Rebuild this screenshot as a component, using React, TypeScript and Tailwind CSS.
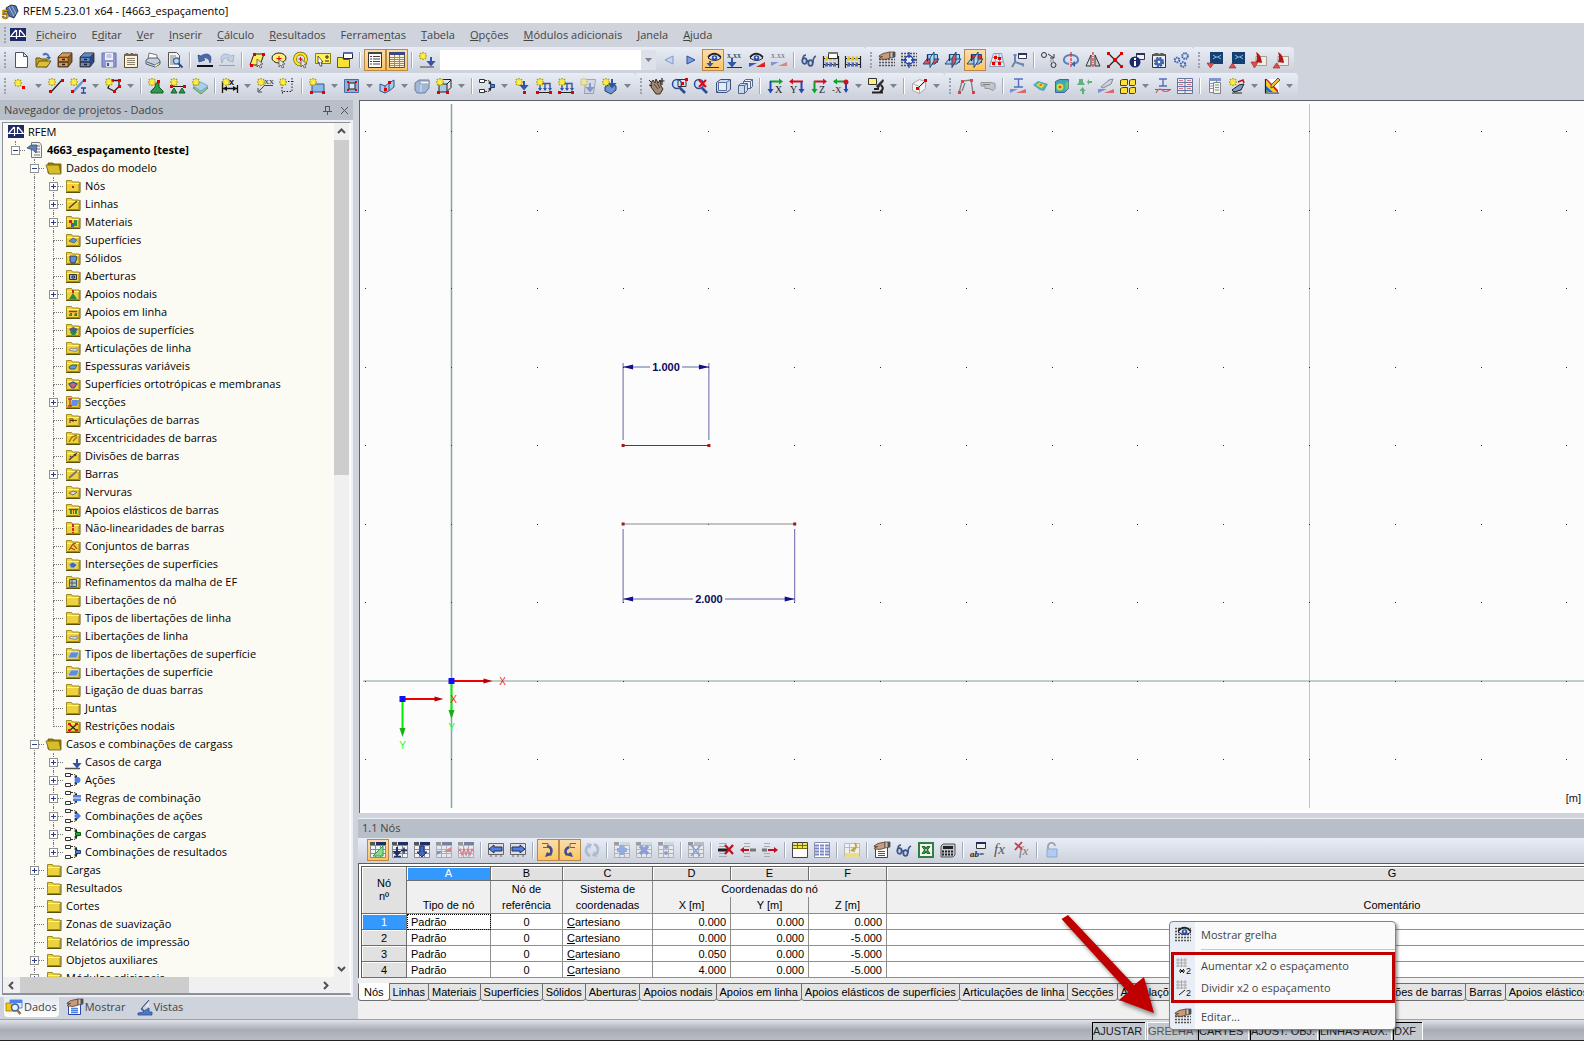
import { Fragment, type ReactNode } from "react";
import clsx from "clsx";

/* ---------- small shapes shared by the icons ---------- */

const Star = ({ x = 0, y = 0 }: { x?: number; y?: number }) => (
  <g transform={`translate(${x} ${y})`}>
    <path d="M4 0v8M0 4h8M1 1l6 6M7 1L1 7" stroke="#b5a300" strokeWidth="1.6" />
    <path d="M4 1v6M1 4h6M2 2l4 4M6 2L2 6" stroke="#fff04a" strokeWidth="1.2" />
  </g>
);

const Dot = ({ x, y, c = "#e00000" }: { x: number; y: number; c?: string }) => (
  <rect x={x} y={y} width="3" height="3" fill={c} />
);

const Down = ({ x, y, c = "#3454a8" }: { x: number; y: number; c?: string }) => (
  <path d={`M${x} ${y}v5M${x - 2.5} ${y + 5}h5l-2.500 3z`} stroke={c} strokeWidth="2" fill={c} />
);

const GridDots = ({ from = 1 }: { from?: number }) => (
  <path
    d={[1.5, 4.5, 7.5, 10.5, 13.5].filter((y) => y >= from).map((y) => `M0 ${y}h16`).join("")}
    stroke="#555"
    strokeDasharray="2 1"
    strokeWidth="1.4"
  />
);

const Hand = () => (
  <>
    <path d="M0 4l4-2.500 7-1.500v6l-3 1-3 .5-2-.5-2 .5-.5-1.500 3-1.500-3 .5z" fill="#c99b78" stroke="#4d3a30" strokeWidth=".8" />
    <path d="M11 0h5v5l-5 1z" fill="#d8c0a8" stroke="#4a4f58" strokeWidth=".8" />
    <path d="M13.500 0H16v5l-2.500.5z" fill="#4a4f58" />
  </>
);

const Eye = ({ x = 0, y = 0 }: { x?: number; y?: number }) => (
  <g transform={`translate(${x} ${y})`}>
    <path d="M0 5q6-8 13 0q-6 5-13 0z" fill="#dfe7f5" stroke="#222" />
    <path d="M0 4q6-7 13 0" stroke="#222" strokeWidth="1.5" />
    <circle cx="6.5" cy="5" r="2.8" fill="#2a4fb0" />
    <circle cx="6.5" cy="4.5" r="1" fill="#fff" />
  </g>
);

const Frame = ({ c = "#1d2f63" }: { c?: string }) => (
  <>
    <path d="M.5 3.5h15v12H.5zM.5 7.5h15M.5 11.5h15M5.5 3.5v12M10.5 3.5v12" fill="#f3f3f3" stroke="#8a8a8a" />
    <path d="M0 0h5v3H0z" fill="#555" />
    <path d="M6 0h10v3H6z" fill={c} />
  </>
);

const Planes = ({ hot }: { hot: "xy" | "xz" | "yz" }) => (
  <>
    <path d="M4.500 2.500h10v8h-10z" fill={hot === "yz" ? "#f02818" : "#a4d4f4"} stroke="#1a4a80" />
    <path d="M0 12l4-5h12l-4 5z" fill={hot === "xy" ? "#f04038" : "#a4d4f4"} fillOpacity=".85" stroke="#1a4a80" />
    <path d="M7 6l4-6v9l-4 6.500z" fill={hot === "xz" ? "#f04038" : "#bfe2fa"} fillOpacity=".85" stroke="#1a4a80" />
    <path d="M4.500 2.500V9" stroke="#12306a" strokeWidth="1.400" />
  </>
);

const Flow = ({ children }: { children?: ReactNode }) => (
  <>
    <path d="M.5 1.5h5v3h-5zM.5 11.5h5v3h-5z" fill="#fff" stroke="#333" />
    <path d="M6 2.500h3q3 1 3 4M6 13.500h3q3-1 3-4" stroke="#333" strokeDasharray="2 1" />
    <path d="M12 7V3L9 5zM12 9v4l-3-2z" fill="#222" />
    {children}
  </>
);

const Axis = ({ t, flip }: { t: string; flip?: boolean }) => {
  const across = t === "X" ? "#10a030" : "#d01020";
  const down = t === "Z" ? "#10a030" : "#2848b0";
  return (
    <>
      <path d={flip ? "M2 3.500h12" : "M3 3.500h10"} stroke={across} strokeWidth="2" />
      <path d={flip ? "M4 .5v6L0 3.500z" : "M12 .5v6l4-3z"} fill={across} />
      <path d={flip ? "M12.500 3v9" : "M3.500 3v9"} stroke={down} strokeWidth="2" />
      <path d={flip ? "M9.500 11h6l-3 4.500z" : "M.5 11h6l-3 4.500z"} fill={down} />
      <text x={flip ? 1 : 8} y="15" fontSize="10" fontFamily="Liberation Serif" fill="#222">
        {t}
      </text>
    </>
  );
};

const Abacus = () => (
  <>
    <path d="M.5 4v12M15.500 4v12M0 6.500h16M0 12.500h16" stroke="#222" strokeWidth="1.200" />
    <path d="M2 6.500h12" stroke="#e8c400" strokeWidth="4" strokeDasharray="3 1" />
    <path d="M2 12.500h12" stroke="#4464c8" strokeWidth="4" strokeDasharray="3 1" />
    <path d="M2 5.500h12M2 11.500h12" stroke="#fff" strokeOpacity=".6" strokeDasharray="1 3" />
  </>
);

const Drawer = ({ a, b }: { a: string; b: string }) => (
  <>
    <path d="M5 1h10v9l-4 5H1V5z" fill={a} stroke="#3a2a18" strokeWidth=".8" />
    <path d="M1 5l4-4h10l-4 4z" fill={b} stroke="#3a2a18" strokeWidth=".5" />
    <path d="M1.500 5.500h9.500v4H1.500zM1.500 10.500h9.500v4H1.500z" fill={b} stroke="#3a2a18" strokeWidth=".6" />
    <path d="M5 7.500h3M5 12.500h3" stroke="#222" strokeWidth="1.300" />
  </>
);

const Lens = ({ children }: { children?: ReactNode }) => (
  <>
    <circle cx="6" cy="6" r="4.500" fill="#cfe2fa" stroke="#2b4a94" strokeWidth="1.500" />
    <path d="M9 10l5 5" stroke="#2b4a94" strokeWidth="2.600" />
    {children}
  </>
);

const Monitor = ({ up }: { up?: boolean }) => (
  <>
    <path d="M3 0h13v12H3z" fill="#15406f" />
    <path d="M6 3l3 2-3 2M14 3l-3 2 3 2M9 5h2" stroke="#7fc4f0" />
    <path d={up ? "M0 16h7l-3.500-5z" : "M0 11h7l-3.500 5z"} fill="#e84a4a" stroke="#a02020" strokeWidth=".6" />
  </>
);

const Pdf = ({ up }: { up?: boolean }) => (
  <>
    <path d="M5 4.500h10.500v9H5z" fill="#f0ece8" stroke="#a89a90" />
    <path d="M5 0q5 2 6 11l-6-1q2-4 0-10z" fill="#b01818" />
    <path d={up ? "M0 16h7l-3.500-5z" : "M0 10h7l-3.500 6z"} fill="#e84a4a" stroke="#a02020" strokeWidth=".6" />
  </>
);

const Loads = () => (
  <>
    <path d="M3 5.500h6v6M9 5.500h5v6M4 6v6" stroke="#3454a8" strokeWidth="1.400" />
    <path d="M2 10h4l-2 3zM7 10h4l-2 3zM12 10h4l-2 3z" fill="#3454a8" />
    <path d="M1 14.500h14" stroke="#222" />
    <Dot x={0} y={13} />
    <Dot x={13} y={13} />
    <Star />
  </>
);

const Arrow = () => (
  <path d="M8 7l6 5-2.500.3 1.300 3-1.600.7-1.400-3L8 15z" fill="#e4e4e4" stroke="#555" strokeWidth=".8" />
);

const icons: Record<string, ReactNode> = {
  doc: <path d="M2.500.5h8l4 4v11h-12zM10.500.5v4h4" fill="#fff" stroke="#4c5566" />,
  open: (
    <>
      <path d="M1 14V6h4l1 1h6v8z" fill="#c9a227" stroke="#6d5510" />
      <path d="M4 9h12l-4 6H1z" fill="#d9bf3a" stroke="#6d5510" />
      <path d="M8 3q4-3 6 2" stroke="#4a76b5" strokeWidth="2" />
      <path d="M11 5h5l-2 3z" fill="#3566b5" />
    </>
  ),
  drawer: <Drawer a="#8c5b28" b="#d99a4e" />,
  drawerBlue: <Drawer a="#274a8c" b="#5b8bd6" />,
  save: (
    <>
      <path d="M1 1h14v14H1z" fill="#8f96d4" stroke="#6a70b0" />
      <path d="M4 1h8v7H4z" fill="#eef0fa" />
      <path d="M5 10h7v5H5z" fill="#dfe2ea" />
      <path d="M5.500 3h5M5.500 5h5" stroke="#9a9fc0" />
      <path d="M6 11h2v3H6z" fill="#4f5590" />
    </>
  ),
  notes: (
    <>
      <path d="M1.500 2.500h13v13h-13z" fill="#fbf3d8" stroke="#5b4a3a" />
      <path d="M1 4l2-3h2l1 2 2-2h2l1 2 2-2 2 3z" fill="#7a6654" />
      <path d="M4 6.500h8M4 8.500h8M4 10.500h8M4 12.500h8" stroke="#8b8070" />
    </>
  ),
  print: (
    <>
      <path d="M4 1l8 2v5H3z" fill="#fff" stroke="#777" />
      <path d="M1 8l3-2h9l2 3v3l-5 3-9-3z" fill="#c9cedd" stroke="#555f78" />
      <path d="M2 10l8 3 5-3" stroke="#555f78" />
      <path d="M10 13l4-2v1l-4 3z" fill="#f4f48a" />
    </>
  ),
  preview: (
    <>
      <path d="M1.500.5h8l3 3v12h-11z" fill="#f4f4f4" stroke="#555" />
      <path d="M3 4h6M3 6h4M3 8h3M3 10h3M3 12h5" stroke="#888" />
      <circle cx="9.500" cy="9" r="3" fill="#bcd8f5" stroke="#456a9c" strokeWidth="1.300" />
      <path d="M11.500 11.500l4 4" stroke="#2b4a84" strokeWidth="2" />
    </>
  ),
  undo: (
    <>
      <path d="M1 3l1 7 6-2-2-2q6-1 7 5q3-8-3-9-4 0-6 2z" fill="#4868b0" stroke="#1f3470" strokeWidth=".6" />
      <path d="M0 14h16" stroke="#111" strokeWidth="2" />
    </>
  ),
  redo: (
    <>
      <path d="M15 3l-1 7-6-2 2-2q-6-1-7 5q-3-8 3-9 4 0 6 2z" fill="#c4d0e4" stroke="#8e9cb8" strokeWidth=".6" />
      <path d="M0 13.500h16" stroke="#9aa0ac" />
    </>
  ),
  selPoly: (
    <>
      <path d="M5 2h10l-4 11H1z" fill="#ffef5a" stroke="#222" />
      <Dot x={4} y={1} />
      <Dot x={13} y={1} />
      <Dot x={1} y={12} />
      <Arrow />
    </>
  ),
  selEllipse: (
    <>
      <ellipse cx="8" cy="6" rx="7" ry="5" fill="#fff27a" stroke="#222" />
      <path d="M8 4v5M5.500 6.500h5" stroke="#e00000" />
      <Arrow />
    </>
  ),
  selRing: (
    <>
      <circle cx="7.500" cy="7" r="5.500" stroke="#6b5d00" strokeWidth="3.500" />
      <circle cx="7.500" cy="7" r="5.500" stroke="#ffe520" strokeWidth="2.200" />
      <path d="M7.500 5v4M5.500 7h4" stroke="#e00000" />
      <Arrow />
    </>
  ),
  selSquare: (
    <>
      <path d="M.5 1.500h15v10H.5z" fill="#ffef5a" stroke="#8b7d00" />
      <path d="M10 5h4M12 3v4M10 9h4" stroke="#222" />
      <path d="M3 4l5 6-2 0 1 4-2 0-1-4-1 1z" fill="#fff" stroke="#222" strokeWidth=".7" />
    </>
  ),
  selWin: (
    <>
      <path d="M.5 5.500h5l1 2h6v8H.5z" fill="#f7e23a" stroke="#6b5d00" />
      <path d="M6.500.5h9v6h-9z" fill="#fff" stroke="#223" />
      <path d="M6 0h10v2H6z" fill="#5b6aa0" />
    </>
  ),
  nav: (
    <>
      <path d="M1.500.5h13v15h-13z" fill="#fff" stroke="#333" />
      <path d="M1 0h14v2H1z" fill="#444" />
      <path d="M3 4.500h2M6 4.500h7M3 7h2M6 7h7M3 9.500h2M6 9.500h7M3 12h2M6 12h7" stroke="#444" />
    </>
  ),
  table: (
    <>
      <path d="M.5.5h15v15H.5z" fill="#fdf1d8" stroke="#555" />
      <path d="M0 0h16v3H0z" fill="#3a4a80" />
      <path d="M1 5.500h14M1 7.500h14M1 9.500h14M1 11.500h14M1 13.500h14M5.500 3v12M10.500 3v12" stroke="#a08a60" />
    </>
  ),
  loadNew: (
    <>
      <Star />
      <Down x={12} y={5} />
      <path d="M1 15h14" stroke="#444" />
    </>
  ),
  prev: <path d="M12 4v8L4 8z" fill="#c9d6ee" stroke="#7d98cc" />,
  next: <path d="M4 4v8l8-4z" fill="#7d9fe0" stroke="#2b4a94" />,
  loadEye: (
    <>
      <path d="M5 9v3" stroke="#3454a8" strokeWidth="2" />
      <path d="M1.500 11h7L5 15z" fill="#3454a8" />
      <Eye x={3} y={1} />
      <path d="M0 15.500h14" stroke="#333" />
    </>
  ),
  loadX: (
    <>
      <text x="0" y="6" fontSize="8" fontFamily="Liberation Serif" fill="#111">x.xx</text>
      <Down x={5} y={6} />
      <path d="M0 15.500h15" stroke="#333" />
    </>
  ),
  eyeRes: (
    <>
      <path d="M0 11h8l-8 4z" fill="#3454c8" />
      <path d="M7 15h9v-5z" fill="#e02020" />
      <Eye x={1} y={1} />
    </>
  ),
  resX: (
    <g opacity=".7">
      <text x="0" y="6" fontSize="8" fontFamily="Liberation Serif" fill="#333">x.xx</text>
      <path d="M0 10h8l-8 4z" fill="#5f78c8" />
      <path d="M7 14h9v-4z" fill="#e06060" />
    </g>
  ),
  glasses: (
    <>
      <ellipse cx="3.500" cy="9" rx="2.200" ry="2.800" stroke="#3c5688" strokeWidth="1.800" fill="#c9d6ea" />
      <ellipse cx="9.500" cy="11" rx="2.200" ry="2.800" stroke="#3c5688" strokeWidth="1.800" fill="#c9d6ea" />
      <path d="M5 8.500l3 1M2 7q0-4 3-4M12 11q0-6 3-7" stroke="#3c5688" strokeWidth="1.600" />
    </>
  ),
  abacusWin: (
    <>
      <Abacus />
      <path d="M5.500.5h9v6h-9z" fill="#fff" stroke="#333" />
      <path d="M5 0h10v2H5z" fill="#777" />
    </>
  ),
  abacus: <Abacus />,
  gridHand: (
    <>
      <GridDots from={7} />
      <Hand />
    </>
  ),
  gridSnap: (
    <>
      <GridDots />
      <circle cx="8" cy="8" r="4" fill="#e6ecfa" stroke="#1d3fb0" strokeWidth="1.400" />
      <path d="M8 0v6M8 10v6M0 8h6M10 8h6" stroke="#1d3fb0" strokeWidth="1.300" />
    </>
  ),
  planeXY: <Planes hot="xy" />,
  planeXZ: <Planes hot="xz" />,
  planeYZ: <Planes hot="yz" />,
  planeGrid: (
    <>
      <path d="M4.500 1.500h8l3 13H.5zM7 2L5.500 14M10 2l1 12M3.500 5.500h10M2 10h12" stroke="#8a9cb8" fill="#e4ecf6" />
      <Dot x={5} y={4} />
      <Dot x={9} y={5} />
      <Dot x={9} y={10} />
      <Dot x={3} y={10} />
    </>
  ),
  axes: (
    <>
      <path d="M4 2v8l9 3M4 10l-3 5" stroke="#6a86ac" strokeWidth="2" />
      <path d="M2 3h4M12 11v4" stroke="#6a86ac" />
      <path d="M7.500 1.500h8v5h-8z" fill="#fff" stroke="#335" />
      <path d="M7 1h9v2H7z" fill="#335" />
    </>
  ),
  copyNodes: (
    <>
      <circle cx="3" cy="3" r="2.500" stroke="#333" />
      <circle cx="12.500" cy="13" r="2.500" stroke="#333" />
      <circle cx="11" cy="9" r="1.500" stroke="#999" />
      <path d="M7 2l6 4M13 2v4H9" stroke="#333" />
    </>
  ),
  rotate: (
    <>
      <path d="M6 12q-6-1-5-5t7-4 7 4-5 5" stroke="#5a82c0" strokeWidth="2" />
      <path d="M12 9v6l-4-3z" fill="#3566b5" />
      <path d="M8 0v16" stroke="#e00000" strokeDasharray="3 1 1 1" />
    </>
  ),
  mirror: (
    <>
      <path d="M6 3v11H1z" stroke="#333" />
      <path d="M10 3v11h5z" fill="#ccc" stroke="#333" />
      <path d="M8 0v16" stroke="#e00000" strokeDasharray="3 1 1 1" />
    </>
  ),
  connect: (
    <>
      <path d="M2 2l12 12M14 2L2 14" stroke="#222" strokeWidth="1.300" />
      <Dot x={0} y={0} />
      <Dot x={13} y={0} />
      <Dot x={0} y={13} />
      <Dot x={13} y={13} />
      <path d="M6 6h4v4H6z" fill="#e00000" />
    </>
  ),
  info: (
    <>
      <path d="M7.500 1.500h8v6h-8z" fill="#eef" stroke="#335" />
      <path d="M7 1h9v2H7z" fill="#335" />
      <circle cx="6" cy="10" r="5.500" fill="#1c2a6c" />
      <path d="M6 9v5M6 6v2" stroke="#fff" strokeWidth="2" />
    </>
  ),
  config: (
    <>
      <path d="M1.500 2.500h13v13h-13z" fill="#e8eefa" stroke="#333" />
      <path d="M1 4l3-3h3l1 1 2-1h2l3 3z" fill="#6a5a4a" />
      <circle cx="8" cy="10" r="4" stroke="#2b4a94" strokeWidth="2" strokeDasharray="2 1.140" />
      <circle cx="8" cy="10" r="2.500" stroke="#4468b0" strokeWidth="2.500" fill="#fff" />
    </>
  ),
  gears: (
    <g stroke="#3f60a8" fill="#dfe8f8">
      <circle cx="4" cy="8" r="2.300" strokeWidth="2" strokeDasharray="1.500 .7" />
      <circle cx="12" cy="4" r="2.800" strokeWidth="2" strokeDasharray="1.500 .7" />
      <circle cx="10" cy="12.500" r="2.300" strokeWidth="2" strokeDasharray="1.500 .7" />
    </g>
  ),
  screenDown: <Monitor />,
  screenUp: <Monitor up />,
  pdfDown: <Pdf />,
  pdfUp: <Pdf up />,
  node: (
    <>
      <Star x={1} y={1} />
      <Dot x={9} y={8} />
    </>
  ),
  line: (
    <>
      <path d="M3 14L14 2" stroke="#222" strokeWidth="1.300" />
      <Dot x={1} y={12} />
      <Dot x={13} y={1} />
      <Star />
    </>
  ),
  member: (
    <>
      <path d="M3 14L14 2" stroke="#6f94cc" strokeWidth="2.400" />
      <Dot x={1} y={12} />
      <Dot x={13} y={1} />
      <Star />
      <path d="M11 10h5M13.500 10v5M11 15h5" stroke="#2848b0" strokeWidth="1.300" />
    </>
  ),
  poly: (
    <>
      <path d="M6 2.500h8v6l-5 5M5 4l-2 6 6 3" stroke="#222" strokeWidth="1.300" />
      <Dot x={6} y={1} />
      <Dot x={13} y={1} />
      <Dot x={13} y={7} />
      <Dot x={8} y={12} />
      <Star />
    </>
  ),
  support: (
    <>
      <path d="M8 5h3v4l4 4v2H3v-2l4-4z" fill="#2f9a4f" stroke="#145a2a" />
      <Dot x={9} y={2} />
      <Star />
    </>
  ),
  lineSupport: (
    <>
      <path d="M2 8.500h12" stroke="#222" />
      <path d="M4 10l3 5H1zM12 10l3 5H9z" fill="#2f9a4f" stroke="#145a2a" />
      <Dot x={0} y={7} />
      <Dot x={13} y={7} />
      <Star />
    </>
  ),
  surfSupport: (
    <>
      <path d="M1 10l8-4 7 4-7 6z" fill="#8cc08c" stroke="#5a9a6a" />
      <path d="M1 8l8-4 7 4-7 5z" fill="#a8d0ec" stroke="#7fa8c8" />
      <Star />
    </>
  ),
  dim: (
    <>
      <path d="M.5 3v12M15.500 7v8M1 10.500h14" stroke="#111" strokeWidth="1.300" />
      <path d="M1 10.500l4-2.500v5zM15 10.500l-4-2.500v5z" fill="#111" />
      <Star />
      <text x="7" y="7" fontSize="9" fontWeight="bold" fontFamily="Liberation Sans" fill="#111">x</text>
    </>
  ),
  dimText: (
    <>
      <path d="M8 7.500h8M8 7L2 13M1 10v4h4" stroke="#444" />
      <Star />
      <text x="7" y="6" fontSize="7" fontFamily="Liberation Serif" fill="#111">XX</text>
    </>
  ),
  guides: (
    <>
      <path d="M3 3.500h10v10H3z" stroke="#222" strokeDasharray="1.500 1.500" />
      <path d="M13 3.500h3M3.500 14v2M13 0v3" stroke="#222" strokeDasharray="1.500 1.500" />
      <Star />
    </>
  ),
  surface: (
    <>
      <path d="M3 6h12v8H3z" fill="#8fb8e6" stroke="#2f5590" />
      <Dot x={1} y={13} />
      <Dot x={13} y={13} />
      <Star />
    </>
  ),
  opening: (
    <>
      <path d="M.5 1.500h14v13H.5z" fill="#8fb0dc" stroke="#4a6ca0" />
      <path d="M5 5h6v6H5z" fill="#dbe7f8" stroke="#222" />
      <path d="M3 3h2v2H3zM11 3h2v2h-2zM3 11h2v2H3zM11 11h2v2h-2z" fill="#e00000" />
    </>
  ),
  shell: (
    <>
      <path d="M1 6l5 2 4-3 5-3v7l-5 4-4 2-5-2zM6 8v7M10 5v8" fill="#a8c8ec" stroke="#2f5590" />
      <Dot x={5} y={10} />
      <Dot x={9} y={3} />
    </>
  ),
  box: (
    <>
      <path d="M1 5l4-3h10v8l-4 5H3l-2-3z" fill="#9fb8d8" stroke="#6a7f9c" />
      <path d="M7 6h8M7 5v9" stroke="#dde6f2" />
      <path d="M6 3h9v3H6z" fill="#f3f5fa" stroke="#8a94a8" />
    </>
  ),
  boxNodes: (
    <>
      <path d="M3 6h8v8H3z" fill="#a8c8ec" stroke="#222" />
      <path d="M7 1.500h8v8l-4 4M11 6l4-4" stroke="#222" />
      <Dot x={1} y={13} />
      <Dot x={10} y={13} />
      <Star />
    </>
  ),
  combine: (
    <Flow>
      <path d="M11.500 6.500h4v3h-4z" fill="#4f80d8" stroke="#1f3f80" />
    </Flow>
  ),
  loadNode: (
    <>
      <Star x={1} />
      <Down x={10} y={3} />
      <Dot x={9} y={13} />
    </>
  ),
  loadLine: <Loads />,
  loadGray: (
    <g opacity=".5">
      <path d="M5.500 1.500h10l-2 14h-9z" fill="#c9d4e8" stroke="#667" />
      <Down x={10} y={5} />
      <Star />
    </g>
  ),
  loadBox: (
    <>
      <path d="M3 9l5-3 6 2v4l-5 4-6-3z" fill="#6f94cc" stroke="#1f3f80" />
      <Down x={10} y={1} />
      <Star />
    </>
  ),
  pan: (
    <>
      <path d="M2 5l2-3 2 3 1-4 2 4 2-3 1 6 2 3-3 5H7L2 9z" fill="#a08a74" stroke="#3d2d20" />
      <path d="M5 6l4 5M8 5l3 5" stroke="#3d2d20" strokeWidth=".8" />
      <path d="M13 0v7M10.500 3h5" stroke="#222" strokeWidth="1.200" />
      <path d="M0 2l3 3M0 7l3 1" stroke="#222" />
    </>
  ),
  zoomWin: (
    <Lens>
      <path d="M7 1.500h8v7H7z" stroke="#333" />
      <Dot x={14} y={0} />
      <Dot x={10} y={4} />
    </Lens>
  ),
  zoomX: (
    <Lens>
      <path d="M6 2l7 7M13 2L6 9" stroke="#d01020" strokeWidth="2.200" />
    </Lens>
  ),
  cube: (
    <>
      <path d="M1.500 4.500l4-3h10v10l-4 3h-10z" fill="#c9d9ef" stroke="#3a4f80" />
      <path d="M3.500 4.500h8v8h-8zM11.500 4.500l4-3M1.500 14.500l2-2" stroke="#5a6f9c" fill="#e4ecf8" />
    </>
  ),
  cubes: (
    <>
      <path d="M6.500 3.500l2-2h7v7l-2 2h-7zM6.500 3.500h7v7M13.500 3.500l2-2" fill="#e8eef8" stroke="#55688f" />
      <path d="M1.500 7.500l2-2h7v7l-3 3h-6zM1.500 7.500h6v8M7.500 7.500l3-2" fill="#c9d9ef" stroke="#55688f" />
    </>
  ),
  viewX: <Axis t="X" />,
  viewY: <Axis t="Y" flip />,
  viewZ: <Axis t="Z" />,
  viewNX: (
    <>
      <path d="M1 3.500h10" stroke="#10a030" strokeWidth="2" />
      <path d="M4 .5v6L0 3.500z" fill="#10a030" />
      <path d="M13 6v6" stroke="#2848b0" strokeWidth="2" />
      <circle cx="13" cy="4" r="2.500" fill="#d01020" />
      <path d="M10.500 11h5L13 15z" fill="#2848b0" />
      <text x="-1" y="15" fontSize="9" fontFamily="Liberation Serif" fill="#222">-X</text>
    </>
  ),
  microscope: (
    <>
      <path d="M.5.5h8v6h-8z" fill="#fff27a" stroke="#333" />
      <path d="M15 1L8 8l2 3 6-8z" fill="#333" />
      <path d="M4 14.500h11M13 7q4 4-1 7M6 11h5" stroke="#222" strokeWidth="2" />
    </>
  ),
  cubeRed: (
    <>
      <path d="M1.500 5.500l7-4 6 2v7l-6 5-7-3zM1.500 5.500l7 3v7M8.500 8.500l6-5" fill="#f4f4f4" stroke="#aaa" />
      <path d="M7 10l7-7" stroke="#222" />
      <Dot x={5} y={9} />
      <Dot x={13} y={1} />
    </>
  ),
  frame: (
    <g opacity=".7">
      <path d="M1 15L4 3l9-1 2 13M4 13L7 5" stroke="#555" strokeWidth="1.300" />
      <Dot x={3} y={2} />
      <Dot x={12} y={1} />
      <Dot x={0} y={13} />
      <Dot x={14} y={13} />
    </g>
  ),
  camera: (
    <g opacity=".7">
      <path d="M1 4.500h10l4 1v5l-2 2-4-2H5V8H1z" fill="#b8bcc4" stroke="#777" />
      <path d="M3 6.500h7" stroke="#555" />
    </g>
  ),
  resI: (
    <g opacity=".75">
      <path d="M4 1h9M8.500 1v8M4 9h9" stroke="#2848b0" strokeWidth="1.400" />
      <path d="M0 11h8l-8 4z" fill="#5f78d8" />
      <path d="M6 15l10-4v4z" fill="#e04040" />
    </g>
  ),
  resSurf: (
    <>
      <path d="M1 7l5-4 10 3-4 7-4-1z" fill="#4fa0d8" />
      <path d="M2.500 7l4-3 8 2.500-3.500 5-3-1z" fill="#62c070" />
      <path d="M4.500 7l3-2 5 2-3 3z" fill="#f2df50" />
      <path d="M6.500 7l2-1 2 1-1.500 1z" fill="#e04a30" />
    </>
  ),
  resCube: (
    <>
      <path d="M1.500 3.500l4-2h9v9l-4 4h-9z" fill="#3fa8b8" stroke="#4a5fa8" />
      <path d="M11.500 5l3-2v7l-3 3z" fill="#70c860" />
      <circle cx="6" cy="9" r="4" fill="#62c860" />
      <circle cx="6" cy="9" r="3" fill="#f2df50" />
      <circle cx="6" cy="9" r="1.600" fill="#e04a30" />
    </>
  ),
  resSup: (
    <g fill="#4aa868" opacity=".85">
      <path d="M3 1h4v3l2 3H1l2-3zM11 4l2-3v2h3v2h-3v2zM6 16v-3H3.500l3-4 3 4H8v3z" />
    </g>
  ),
  resSection: (
    <g opacity=".75">
      <path d="M3 9l8-7 4-1-2 5-8 4z" fill="#c8d0dc" stroke="#667" />
      <path d="M0 11h9l-9 4z" fill="#5f78d8" />
      <path d="M6 15l10-4v4z" fill="#e04040" />
    </g>
  ),
  tiles: (
    <path
      d="M.5 2.500l2-1h5v5l-1 1h-6zM9.500 2.500l2-1h4v5l-1 1h-5zM.5 10.500l2-1h5v5l-1 1h-6zM9.500 10.500l2-1h4v5l-1 1h-5z"
      fill="#ffdf3a"
      stroke="#4d4200"
    />
  ),
  resMember: (
    <g opacity=".75">
      <path d="M4 1h8M8 1v7M4 8h8" stroke="#2848b0" strokeWidth="1.400" />
      <path d="M0 11.500h16" stroke="#445" />
      <path d="M1 15q3-6 6-3t8 0" stroke="#d03040" strokeWidth="1.200" />
    </g>
  ),
  resTable: (
    <g opacity=".75">
      <path d="M.5.5h15v15H.5zM.5 4.500h15M.5 8.500h15M.5 12.500h15M8 .5v15" fill="#eef1fa" stroke="#3d4f88" />
      <path d="M2 2.500h4M10 2.500h4M2 6.500h4M10 6.500h4M2 10.500h4M10 10.500h4" stroke="#d05060" />
    </g>
  ),
  report: (
    <g opacity=".85">
      <path d="M2.500 1.500h7v13h-7z" fill="#fff" stroke="#777" />
      <path d="M2 0h12v3H2z" fill="#7088c8" />
      <path d="M3 5.500h3M3 8h3M3 10.500h3" stroke="#888" />
      <path d="M6.500 4.500h7v11h-7z" fill="#f4f4f4" stroke="#777" />
      <path d="M8 7h4M8 9.500h4M8 12h4" stroke="#58a058" />
    </g>
  ),
  newView: (
    <>
      <path d="M3 12l7-5 5-1-3 6-7 2zM3 15h10" fill="#7f9cc8" stroke="#222" />
      <path d="M9 4l5-2 1 3" stroke="#c01020" strokeWidth="1.500" />
      <Star />
    </>
  ),
  colors: (
    <>
      <path d="M1 1h14v14H1z" fill="#fff" />
      <path d="M1 2l13 12H9L1 7z" fill="#f2d500" />
      <path d="M1 7l8 7H5l-4-3z" fill="#2060d0" />
      <path d="M1 11l4 3H1z" fill="#2fa040" />
      <path d="M1 1h2l11 11v3z" fill="#e02020" />
      <path d="M7 7l7-7 2 2-7 7-2 1z" fill="#e8c040" stroke="#222" strokeWidth=".7" />
      <path d="M1.500 1v14H15" stroke="#222" strokeWidth="1.200" />
    </>
  ),
  tblEdit: (
    <>
      <Frame />
      <path d="M3 14L13 4v10z" fill="#8fd890" stroke="#2f9a4f" />
    </>
  ),
  tblSort: (
    <>
      <Frame />
      <Down x={5} y={5} c="#1d2f63" />
      <path d="M9 8.500h6M12 5.500v6M2 14.500h7" stroke="#1d2f63" strokeWidth="1.500" />
    </>
  ),
  tblDown: (
    <>
      <Frame />
      <path d="M6 4h4v6h3l-5 5-5-5h3z" fill="#3f68c8" stroke="#1d2f63" />
    </>
  ),
  tblRes: (
    <g opacity=".55">
      <Frame />
      <path d="M1 13l6-4H1z" fill="#3050c0" />
      <path d="M7 10l8-5v5z" fill="#d04040" />
    </g>
  ),
  tblWave: (
    <g opacity=".55">
      <Frame />
      <path d="M0 10l2-3 2 6 2-6 2 6 2-6 2 6 2-6 2 3" stroke="#d03040" strokeWidth="1.200" />
    </g>
  ),
  tblLeft: (
    <>
      <path d="M.5 1.500h15v11H.5zM3 13v2M8 13v2M13 13v2" fill="#e0e0e0" stroke="#666" />
      <path d="M1 7l5-4v2h8v4H6v2z" fill="#4f80e0" stroke="#1d2f63" />
    </>
  ),
  tblRight: (
    <>
      <path d="M.5 1.500h15v11H.5zM3 13v2M8 13v2M13 13v2" fill="#e0e0e0" stroke="#666" />
      <path d="M15 7l-5-4v2H2v4h8v2z" fill="#4f80e0" stroke="#1d2f63" />
    </>
  ),
  turnR: (
    <>
      <path d="M7 4q7 2 3 9" stroke="#3a4f90" strokeWidth="2.600" />
      <path d="M2 1.500h6v4H3" stroke="#666" />
      <path d="M5 15l2-5 5 3z" fill="#3a4f90" />
    </>
  ),
  turnL: (
    <>
      <path d="M7 5q-6 3-2 8" stroke="#3a4f90" strokeWidth="2.600" />
      <path d="M14 1.500H8v4h5" stroke="#666" />
      <path d="M11 15l-2-5-6 3z" fill="#3a4f90" />
    </>
  ),
  sync: (
    <g opacity=".7">
      <path d="M6 14Q0 11 3 5l2-2M10 2q6 3 3 9l-2 2" stroke="#9aaccc" strokeWidth="2.800" />
      <path d="M3 1l5 1-2 5zM13 15l-5-1 2-5z" fill="#9aaccc" />
    </g>
  ),
  rowAdd: (
    <g opacity=".5">
      <Frame c="#bcc" />
      <path d="M6 3h4v3h3v4h-3v3H6v-3H3V6h3z" fill="#4f78d8" />
    </g>
  ),
  rowMul: (
    <g opacity=".5">
      <Frame c="#bcc" />
      <path d="M4 4l8 8M12 4l-8 8" stroke="#3f60c0" strokeWidth="3.500" />
    </g>
  ),
  rowDiv: (
    <g opacity=".5">
      <Frame c="#bcc" />
      <circle cx="8" cy="5" r="2" fill="#3f60c0" />
      <circle cx="8" cy="11" r="2" fill="#3f60c0" />
    </g>
  ),
  rowX: (
    <g opacity=".55">
      <Frame c="#999" />
      <path d="M3 3l9 11M13 3L3 14" stroke="#4f70c0" strokeWidth="1.800" />
    </g>
  ),
  rowDel: (
    <>
      <path d="M1 1.500h8M1 4.500h8M1 11.500h8M1 14.500h8" stroke="#aaa" />
      <path d="M0 8h10" stroke="#222" strokeWidth="3" />
      <path d="M7 3l8 9M15 3l-8 9" stroke="#c01020" strokeWidth="2.200" />
    </>
  ),
  rowIns: (
    <>
      <path d="M4 1.500h6M4 4.500h6M4 11.500h6M4 14.500h6" stroke="#aaa" />
      <path d="M10 8h6" stroke="#777" strokeWidth="3" />
      <path d="M0 8l4-3v2h5v2H4v2z" fill="#c01020" />
    </>
  ),
  rowOut: (
    <>
      <path d="M2 1.500h6M2 4.500h6M2 11.500h6M2 14.500h6" stroke="#aaa" />
      <path d="M0 8h5" stroke="#777" strokeWidth="3" />
      <path d="M16 8l-4-3v2H6v2h6v2z" fill="#c01020" />
    </>
  ),
  tblYellow: (
    <>
      <path d="M.5.5h15v15H.5z" fill="#fff" stroke="#444" />
      <path d="M1 1h14v6H1z" fill="#f2e25a" />
      <path d="M1 3.500h14M1 6.500h14M5.500 1v6M10.500 1v6" stroke="#7a6d10" />
    </>
  ),
  tblBlue: (
    <>
      <path d="M.5.5h15v15H.5z" fill="#fff" stroke="#8a90a8" />
      <path d="M1 3.500h14M1 6.500h14M1 9.500h14M1 12.500h14" stroke="#7a86c8" strokeWidth="2" />
      <path d="M5.500 2v12M10.500 2v12" stroke="#fff" />
    </>
  ),
  tblGo: (
    <g opacity=".7">
      <path d="M.5 1.500h15v13H.5zM.5 5.500h15M5.500 1v13" fill="#f8f8f0" stroke="#aaa" />
      <path d="M1 11h14v4H1z" fill="#f2e25a" />
      <path d="M11 1q3 5-2 7" stroke="#a89000" strokeWidth="2" />
      <path d="M6 9l4-4 1 5z" fill="#a89000" />
    </g>
  ),
  tblHand: (
    <>
      <path d="M1.500 4.500h12v11h-12z" fill="#fff" stroke="#444" />
      <path d="M4 9.500h7M4 11.500h7M4 13.500h7" stroke="#555" />
      <Hand />
    </>
  ),
  excel: (
    <>
      <path d="M1 1h14v14H1z" fill="#f2f8f0" stroke="#2f8040" strokeWidth="2" />
      <path d="M4 4.500h3l5 7H9zM12 4.500H9l-5 7h3z" fill="#2f9a4a" stroke="#14501f" strokeWidth=".8" />
    </>
  ),
  calc: (
    <>
      <path d="M1 4l2-2h12v11l-2 2H1z" fill="#c4c8d0" stroke="#555" />
      <path d="M3 4h10v3H3z" fill="#222" />
      <path d="M2 9.500h11M2 12.500h11" stroke="#222" strokeWidth="1.800" strokeDasharray="2 1" />
    </>
  ),
  formula: (
    <>
      <path d="M6.500.5h9v6h-9z" fill="#eee" stroke="#333" />
      <path d="M6 0h10v2H6z" fill="#1d2f63" />
      <text x="0" y="15" fontSize="9" fontStyle="italic" fontWeight="bold" fontFamily="Liberation Serif" fill="#222">
        ab=
      </text>
    </>
  ),
  fx: (
    <text x="2" y="12" fontSize="15" fontStyle="italic" fontFamily="Liberation Serif" fill="#555">
      fx
    </text>
  ),
  fxDel: (
    <>
      <text x="5" y="13" fontSize="13" fontStyle="italic" fontFamily="Liberation Serif" fill="#777">
        fx
      </text>
      <path d="M1 1l7 6M8 0L1 8" stroke="#c04050" strokeWidth="1.800" />
    </>
  ),
  lock: (
    <>
      <path d="M4 8V4q1-4 5-3 2 1 2 3" stroke="#9aa0a8" strokeWidth="1.800" />
      <path d="M3 7h10v8H3z" fill="#b0ccf4" stroke="#8fa8d0" />
    </>
  ),
  gridEye: (
    <>
      <GridDots />
      <Eye x={3} y={0} />
    </>
  ),
  gridMul: (
    <>
      <path d="M3 0v9M6.500 0v9M10 0v9M1 2h11M1 5h11M1 8h11" stroke="#aaa" />
      <path d="M4 13h6M5 11l4 4M9 11l-4 4" stroke="#111" />
      <text x="11" y="16" fontSize="9" fontFamily="Liberation Sans" fill="#111">2</text>
    </>
  ),
  gridDiv: (
    <>
      <path d="M3 0v9M6.500 0v9M10 0v9M1 2h11M1 5h11M1 8h11" stroke="#aaa" />
      <path d="M4 15l6-5" stroke="#111" />
      <text x="11" y="16" fontSize="9" fontFamily="Liberation Sans" fill="#111">2</text>
    </>
  ),
  tabData: (
    <>
      <path d="M4 1h12v8H4z" fill="#dfe9fb" stroke="#5f8ae0" />
      <path d="M4 1h12v3H4z" fill="#4f80e8" />
      <path d="M0 4h4l1 1h3v7H0z" fill="#f2c91a" stroke="#8a6d00" strokeWidth=".7" />
      <circle cx="9" cy="8.500" r="3.500" fill="#e6effc" stroke="#3c5c98" strokeWidth="1.400" />
      <path d="M11.500 11.500l3 3.500" stroke="#9a6a3a" strokeWidth="2.400" />
    </>
  ),
  tabShow: (
    <>
      <path d="M1.500 3.500h12v12h-12z" fill="#fff" stroke="#2848b0" />
      <path d="M4 9.500h7M4 11.500h7M4 13.500h7" stroke="#4f80e8" strokeWidth="1.300" />
      <Hand />
    </>
  ),
  tabViews: (
    <>
      <path d="M12 1L5 9l2 3 5-3v4h3v3H1v-2l6-1-3-3z" fill="#4f78c8" stroke="#2f4f90" strokeWidth=".8" />
      <path d="M8 8l4-5v4z" fill="#e8f0ff" />
    </>
  ),
  rfem: (
    <>
      <path d="M0 1h16v13H0z" fill="#1d2a68" />
      <path d="M0 9.500h16M6.500 3v9M6 3L1 9M9.500 3v6M10 3l5 6" stroke="#fff" strokeWidth="1.200" />
    </>
  ),
  model: (
    <>
      <path d="M4.500.5h8l2 3v12h-10z" fill="#f4f4f4" stroke="#777" />
      <path d="M9 4h4M9 7h4M8 10h5M7 13h6" stroke="#777" />
      <path d="M0 6l4-3h6l-1 8-3-3z" fill="#5f80b0" stroke="#35517f" strokeWidth=".8" />
    </>
  ),
  app: (
    <>
      <path d="M4 4l5-3 5 1 2 5-4 7-5-2z" fill="#4f6f9c" stroke="#243a5c" />
      <path d="M7 3l5 9M10 2l4 8" stroke="#a8c0e0" />
      <text x="0" y="15" fontSize="12" fontWeight="bold" fontFamily="Liberation Sans" fill="#f2b600" stroke="#5b4400" strokeWidth=".6">
        5
      </text>
    </>
  ),
  folderOpen: (
    <>
      <path d="M2 13V3h5l1 1h7v9z" fill="#a58a10" stroke="#5f4f08" strokeWidth=".8" />
      <path d="M0 5h13l2 9H3z" fill="#d8bd28" stroke="#6f5d0c" strokeWidth=".8" />
    </>
  ),
  loadCase: (
    <>
      <Down x={12} y={5} />
      <path d="M0 14.500h15" stroke="#555" strokeWidth="1.500" />
    </>
  ),
  actions: (
    <Flow>
      <circle cx="12.500" cy="8" r="3" fill="#4f80e8" />
    </Flow>
  ),
  rules: (
    <Flow>
      <path d="M8 5h8v2.500H8zM8 8.500h8V11H8z" fill="#4f80e8" />
    </Flow>
  ),
  comboActions: (
    <Flow>
      <path d="M12.500 4.500l3.500 3.500-3.500 3.500L9 8z" fill="#4f80e8" />
    </Flow>
  ),
  comboLoads: (
    <Flow>
      <path d="M10.500 6.500h5v3h-5z" fill="#18b030" stroke="#0a5a18" />
    </Flow>
  ),
  comboResults: (
    <Flow>
      <path d="M10.500 6.500h5v3h-5z" fill="#4f80e8" stroke="#1f3f80" />
    </Flow>
  ),
};

/* pictograms drawn on top of the yellow tree folder */
const marks: Record<string, ReactNode> = {
  node: <path d="M7 8h2v2H7z" fill="#d01010" />,
  line: <path d="M4 12l8-7" stroke="#5b3a10" strokeWidth="1.300" />,
  material: (
    <>
      <path d="M4 6h3v3H4z" fill="#d02020" />
      <path d="M6 9h3v4H6z" fill="#3060d0" />
      <path d="M9 6h3v6H9z" fill="#309040" />
    </>
  ),
  surface: <path d="M4 9l4-3 4 2-3 3z" fill="#5f8fd8" stroke="#345" strokeWidth=".6" />,
  solid: <path d="M5 6h6l1 2-2 5H6l-1-2z" fill="#5f8fd8" stroke="#223" strokeWidth=".8" />,
  opening: <path d="M4.500 6.500h7v5h-7zM7 8h2.500v2H7z" fill="#9fb8d8" stroke="#334" />,
  support: (
    <>
      <path d="M8 7l4 6H4z" fill="#2f8a3f" />
      <path d="M7 4h2v3H7z" fill="#d02020" />
    </>
  ),
  lineSupport: (
    <>
      <path d="M4 7.500h8" stroke="#d02020" strokeWidth="1.500" />
      <path d="M5 9h2v3H4zM10 9h2v3H9z" fill="#2f8a3f" />
    </>
  ),
  surfSupport: (
    <>
      <path d="M4 7l4-2 5 2-2 3H6z" fill="#4a5f88" />
      <path d="M5 10h7l-2 3H7z" fill="#2f8a3f" />
    </>
  ),
  hinge: <path d="M4 10q2-3 4-1l4-1v3H8z" fill="#e4ecf8" stroke="#667" strokeWidth=".7" />,
  thick: <path d="M4 9l3-2h5l-2 4H5z" fill="#5f9fe0" stroke="#234" strokeWidth=".7" />,
  ortho: <path d="M4 8l4-2 4 2-3 4H7z" fill="#d06080" stroke="#2f50a0" strokeWidth="1.200" />,
  section: (
    <>
      <path d="M7 6h7l-2 6H6z" fill="#5f8fe8" />
      <path d="M3 5h4M5 5v7M3 12h4" stroke="#c03040" strokeWidth="1.300" />
    </>
  ),
  memberHinge: <path d="M5 6v5M5 8.500h7M6 7h2v3" stroke="#5b3a10" />,
  eccentric: <path d="M4 12l3-5 5-2M8 11l4-4" stroke="#a07010" strokeWidth="1.400" />,
  member: <path d="M4 12l8-7M5 8l2 2M9 6l2 2" stroke="#444" strokeWidth="1.400" />,
  bar: <path d="M4 12l8-7" stroke="#777" strokeWidth="2" />,
  rib: <path d="M4 9l4-2 4 1-4 3z" fill="#ddd" stroke="#555" strokeWidth=".8" />,
  elastic: (
    <>
      <path d="M4 7.500h9" stroke="#d02020" strokeWidth="1.400" />
      <path d="M5 8h2v4H5zM8 8h1v4H8zM10 8h2v4h-2z" fill="#2f8a3f" />
    </>
  ),
  nonlinear: <path d="M8 4v9" stroke="#c02020" strokeWidth="1.800" strokeDasharray="3 1" />,
  sets: <path d="M4 12l4-6 4 5M8 6l3-1M6 10l4 2" stroke="#b04020" strokeWidth="1.200" />,
  intersect: <path d="M4 8l4-2 4 3-3 3H6z" fill="#3f68b8" stroke="#a8c8ec" />,
  mesh: <path d="M4.500 5.500h7v7h-7zM7 5v8M4 9h8" fill="#b8c8a8" stroke="#445a80" />,
  release: <path d="M3 11l3-5h8l-2 6H4z" fill="#5f8fd0" stroke="#b8d0ec" />,
  constraint: (
    <>
      <path d="M4 6l8 7M12 6l-8 7" stroke="#222" strokeWidth="1.200" />
      <path d="M3 5h3v2H3zM10 5h3v2h-3zM3 11h3v2H3zM10 11h3v2h-3z" fill="#e01010" />
    </>
  ),
};

const Folder = ({ mark }: { mark: string }) => (
  <>
    <path d="M1.500 13.500v-11h5l1 1.500h6.500v9.500z" fill="#ecd23c" stroke="#a08a20" />
    <path d="M2 5.500h12" stroke="#fff2a0" />
    <path d="M1 14.500h14V4" stroke="#5f520f" />
    {marks[mark]}
  </>
);

// "f/…" names are folders carrying a pictogram
const Icon = ({ name }: { name: string }) => (
  <svg width="16" height="16" viewBox="0 0 16 16" fill="none" className="shrink-0 overflow-visible" aria-hidden>
    {name.startsWith("f/") ? <Folder mark={name.slice(2)} /> : icons[name]}
  </svg>
);

/* ---------- toolbars ---------- */

// "|" separator, trailing ":v" drop-down arrow, trailing "*" pressed
const fileTools =
  "doc open drawer drawerBlue save notes print preview | undo redo | selPoly selEllipse selRing selSquare selWin | nav* table* | loadNew";
const loadTools = "prev next loadEye* loadX eyeRes resX | glasses abacusWin abacus";
const planeTools =
  "gridHand gridSnap planeXY planeXZ planeYZ* planeGrid axes | copyNodes rotate mirror connect info config gears";
const exportTools = "screenDown screenUp pdfDown pdfUp";
const insertTools =
  "node:v line member:v poly:v | support lineSupport surfSupport | dim:v dimText guides | surface:v opening:v shell:v box boxNodes:v | combine:v loadNode loadLine loadLine loadGray loadBox:v";
const viewTools = "pan zoomWin zoomX cube cubes | viewX viewY viewZ viewNX:v microscope:v | cubeRed:v";
const resultTools =
  "frame camera | resI resSurf resCube resSup resSection tiles:v resMember resTable | report newView:v colors:v";
const tableTools =
  "tblEdit* tblSort tblDown tblRes tblWave | tblLeft tblRight | turnR* turnL* sync | rowAdd rowMul rowDiv | rowX | rowDel rowIns rowOut | tblYellow tblBlue | tblGo | tblHand glasses excel calc | formula fx fxDel | lock";

function Tools({ list }: { list: string }) {
  return (
    <>
      {list.split(" ").map((item, i) => {
        if (item === "|") return <span key={i} className="mx-[3px] h-4 w-[2px] shrink-0 border-l border-[#a4abb8] bg-white" />;
        const name = item.replace("*", "").replace(":v", "");
        return (
          <Fragment key={i}>
            <button
              type="button"
              aria-label={name}
              className={clsx(
                "flex h-[22px] w-[22px] shrink-0 items-center justify-center",
                item.endsWith("*") && "border border-[#b98a45] bg-linear-to-b from-[#fbdcae] to-[#fec45c]"
              )}
            >
              <Icon name={name} />
            </button>
            {item.endsWith(":v") && (
              <button type="button" aria-label={`${name} menu`} className="flex w-[13px] shrink-0 justify-center">
                <svg width="7" height="4" viewBox="0 0 7 4" aria-hidden>
                  <path d="M0 0h7L3.500 4z" fill="#7d828c" />
                </svg>
              </button>
            )}
          </Fragment>
        );
      })}
    </>
  );
}

function ToolGroup({ children }: { children: ReactNode }) {
  return (
    <div className="flex h-[25px] shrink-0 items-center rounded-r-sm bg-linear-to-b from-[#e9edf6] to-[#ccd1db] pr-[2px]">
      <span className="ml-1 mr-1 h-4 w-[2px] shrink-0 border-l-2 border-dotted border-[#9da3ae]" />
      {children}
    </div>
  );
}

/* ---------- menu ---------- */

const menu: [string, string, string][] = [
  ["", "F", "icheiro"],
  ["E", "d", "itar"],
  ["", "V", "er"],
  ["", "I", "nserir"],
  ["", "C", "álculo"],
  ["", "R", "esultados"],
  ["Ferrame", "n", "tas"],
  ["", "T", "abela"],
  ["", "O", "pções"],
  ["", "M", "ódulos adicionais"],
  ["", "J", "anela"],
  ["", "A", "juda"],
];

/* ---------- tree ---------- */

type Item = { d: number; t: string; icon: string; x?: "+" | "-"; last?: boolean; bold?: boolean };

const tree: Item[] = [
  { d: 0, t: "RFEM", icon: "rfem" },
  { d: 1, t: "4663_espaçamento [teste]", icon: "model", x: "-", last: true, bold: true },
  { d: 2, t: "Dados do modelo", icon: "folderOpen", x: "-" },
  { d: 3, t: "Nós", icon: "f/node", x: "+" },
  { d: 3, t: "Linhas", icon: "f/line", x: "+" },
  { d: 3, t: "Materiais", icon: "f/material", x: "+" },
  { d: 3, t: "Superfícies", icon: "f/surface" },
  { d: 3, t: "Sólidos", icon: "f/solid" },
  { d: 3, t: "Aberturas", icon: "f/opening" },
  { d: 3, t: "Apoios nodais", icon: "f/support", x: "+" },
  { d: 3, t: "Apoios em linha", icon: "f/lineSupport" },
  { d: 3, t: "Apoios de superfícies", icon: "f/surfSupport" },
  { d: 3, t: "Articulações de linha", icon: "f/hinge" },
  { d: 3, t: "Espessuras variáveis", icon: "f/thick" },
  { d: 3, t: "Superfícies ortotrópicas e membranas", icon: "f/ortho" },
  { d: 3, t: "Secções", icon: "f/section", x: "+" },
  { d: 3, t: "Articulações de barras", icon: "f/memberHinge" },
  { d: 3, t: "Excentricidades de barras", icon: "f/eccentric" },
  { d: 3, t: "Divisões de barras", icon: "f/member" },
  { d: 3, t: "Barras", icon: "f/bar", x: "+" },
  { d: 3, t: "Nervuras", icon: "f/rib" },
  { d: 3, t: "Apoios elásticos de barras", icon: "f/elastic" },
  { d: 3, t: "Não-linearidades de barras", icon: "f/nonlinear" },
  { d: 3, t: "Conjuntos de barras", icon: "f/sets" },
  { d: 3, t: "Interseções de superfícies", icon: "f/intersect" },
  { d: 3, t: "Refinamentos da malha de EF", icon: "f/mesh" },
  { d: 3, t: "Libertações de nó", icon: "f/" },
  { d: 3, t: "Tipos de libertações de linha", icon: "f/" },
  { d: 3, t: "Libertações de linha", icon: "f/hinge" },
  { d: 3, t: "Tipos de libertações de superfície", icon: "f/release" },
  { d: 3, t: "Libertações de superfície", icon: "f/release" },
  { d: 3, t: "Ligação de duas barras", icon: "f/" },
  { d: 3, t: "Juntas", icon: "f/" },
  { d: 3, t: "Restrições nodais", icon: "f/constraint", last: true },
  { d: 2, t: "Casos e combinações de cargass", icon: "folderOpen", x: "-" },
  { d: 3, t: "Casos de carga", icon: "loadCase", x: "+" },
  { d: 3, t: "Ações", icon: "actions", x: "+" },
  { d: 3, t: "Regras de combinação", icon: "rules", x: "+" },
  { d: 3, t: "Combinações de ações", icon: "comboActions", x: "+" },
  { d: 3, t: "Combinações de cargas", icon: "comboLoads", x: "+" },
  { d: 3, t: "Combinações de resultados", icon: "comboResults", x: "+", last: true },
  { d: 2, t: "Cargas", icon: "f/", x: "+" },
  { d: 2, t: "Resultados", icon: "f/" },
  { d: 2, t: "Cortes", icon: "f/" },
  { d: 2, t: "Zonas de suavização", icon: "f/" },
  { d: 2, t: "Relatórios de impressão", icon: "f/" },
  { d: 2, t: "Objetos auxiliares", icon: "f/", x: "+" },
  { d: 2, t: "Módulos adicionais", icon: "f/", x: "+" },
];

function TreeRow({ item }: { item: Item }) {
  return (
    <li className="flex h-[18px] items-center">
      {Array.from({ length: item.d }, (_, level) => {
        const own = level === item.d - 1;
        const upper = own || level === 1;
        const lower = own ? !item.last : level === 1;
        return (
          <span key={level} className="relative flex h-[18px] w-[19px] shrink-0 flex-col pl-[9px]">
            <span
              className={clsx(
                "h-[10px] border-dotted border-[#777]",
                upper && "border-l",
                own && "border-b"
              )}
            />
            <span className={clsx("h-2 border-dotted border-[#777]", lower && "border-l")} />
            {own && item.x && (
              <button
                type="button"
                aria-label={item.t}
                className="absolute left-[5px] top-[5px] flex h-[9px] w-[9px] items-center justify-center border border-[#919191] bg-white"
              >
                <svg width="5" height="5" viewBox="0 0 5 5" aria-hidden>
                  <path d={item.x === "+" ? "M0 2.500h5M2.500 0v5" : "M0 2.500h5"} stroke="#27408b" />
                </svg>
              </button>
            )}
          </span>
        );
      })}
      <span className="flex w-[22px] shrink-0 justify-start pl-[2px]">
        <Icon name={item.icon} />
      </span>
      <span className={clsx("whitespace-nowrap leading-[18px]", item.bold && "font-bold")}>{item.t}</span>
    </li>
  );
}

const Chevron = ({ d }: { d: string }) => (
  <svg width="9" height="9" viewBox="0 0 9 9" fill="none" aria-hidden>
    <path d={d} stroke="#505050" strokeWidth="2" />
  </svg>
);

function Navigator() {
  return (
    <aside className="flex w-[353px] shrink-0 flex-col">
      <div className="flex h-[20px] items-center bg-[#b9bfc9] px-1 text-[#444]">
        <h2 className="flex-1 leading-[18px]">Navegador de projetos - Dados</h2>
        <button type="button" aria-label="Fixar" className="mr-2">
          <svg width="9" height="9" viewBox="0 0 9 9" fill="none" aria-hidden>
            <path d="M2.500 0v5M6.500 0v5M2 .5h5M0 5.500h9M4.500 6v3" stroke="#555" />
          </svg>
        </button>
        <button type="button" aria-label="Fechar">
          <svg width="9" height="9" viewBox="0 0 9 9" fill="none" aria-hidden>
            <path d="M1 1l7 7M8 1L1 8" stroke="#555" />
          </svg>
        </button>
      </div>
      <div className="flex min-h-0 flex-1 flex-col border-2 border-[#eef0f6] bg-[#fcfbf3]">
        <div className="flex min-h-0 flex-1 flex-col border border-b-2 border-[#8c9099] border-r-white">
          <div className="flex min-h-0 flex-1">
            <ul className="min-w-0 flex-1 overflow-hidden pl-[3px] text-black">
              {tree.map((item) => (
                <TreeRow key={item.t} item={item} />
              ))}
            </ul>
            <div className="mr-px flex w-[15px] flex-col items-center bg-[#f0f0f0]">
              <span className="flex h-[17px] items-center">
                <Chevron d="M1 6l3.500-3.500L8 6" />
              </span>
              <span className="h-[335px] w-full bg-[#cdcdcd]" />
              <span className="mt-auto flex h-[17px] items-center">
                <Chevron d="M1 3l3.500 3.500L8 3" />
              </span>
            </div>
          </div>
          <div className="flex h-[16px] bg-[#f0f0f0]">
            <span className="flex w-[17px] items-center justify-center">
              <Chevron d="M6 1L2.500 4.500 6 8" />
            </span>
            <span className="w-[169px] bg-[#cdcdcd]" />
            <span className="ml-auto mr-[16px] flex w-[17px] items-center justify-center">
              <Chevron d="M3 1l3.500 3.500L3 8" />
            </span>
          </div>
        </div>
      </div>
      <div className="flex h-[22px] shrink-0 items-start gap-2 pl-1 text-[#444]">
        <button type="button" className="flex h-[20px] items-center gap-[2px] rounded-b-sm bg-linear-to-b from-[#e4e8f0] to-white px-[2px]">
          <Icon name="tabData" />
          Dados
        </button>
        <button type="button" className="flex h-[20px] items-center gap-[2px]">
          <Icon name="tabShow" />
          Mostrar
        </button>
        <button type="button" className="ml-1 flex h-[20px] items-center">
          <Icon name="tabViews" />
          Vistas
        </button>
      </div>
    </aside>
  );
}

/* ---------- model view ---------- */

const ORIGIN = { x: 91.5, y: 580 };
const PITCH = { x: 85.8, y: 78.5 };
const px = (m: number) => ORIGIN.x + PITCH.x * m;
const py = (m: number) => ORIGIN.y + PITCH.y * m;
const range = (from: number, to: number) => Array.from({ length: to - from + 1 }, (_, i) => from + i);

type DimensionProps = { from: number; to: number; at: number; ext: [number, number]; label: string };

function Dimension({ from, to, at, ext, label }: DimensionProps) {
  const mid = (px(from) + px(to)) / 2;
  return (
    <g>
      <path
        d={`M${px(from)} ${ext[0]}V${ext[1]}M${px(to)} ${ext[0]}V${ext[1]}M${px(from)} ${at}H${mid - 16}M${mid + 16} ${at}H${px(to)}`}
        stroke="#33338c"
        strokeOpacity=".75"
      />
      <path d={`M${px(from)} ${at}l10-2.500v5zM${px(to)} ${at}l-10-2.500v5z`} fill="#10108a" />
      <text x={mid} y={at + 4} textAnchor="middle" fontSize="11" fontWeight="bold" fill="#0a0a5c">
        {label}
      </text>
    </g>
  );
}

function AxisCross({ x, y }: { x: number; y: number }) {
  return (
    <g>
      <path d={`M${x} ${y}v31`} stroke="#00f000" strokeWidth="2" />
      <path d={`M${x - 3} ${y + 29}h6l-3 9z`} fill="#10b010" />
      <path d={`M${x} ${y}h34`} stroke="#f00000" strokeWidth="2" />
      <path d={`M${x + 32} ${y - 2.5}v5l9-2.500z`} fill="#b80000" />
      <rect x={x - 3} y={y - 3} width="6" height="6" fill="#1010f0" />
      <text x={x + 51} y={y + 4} textAnchor="middle" fontSize="10" fill="#ff2020">X</text>
      <text x={x} y={y + 50} textAnchor="middle" fontSize="10" fill="#20ff20">Y</text>
    </g>
  );
}

function ModelView() {
  return (
    <div className="ml-px flex min-h-0 flex-1 border-l border-t border-[#5f6268] bg-white pb-[2px]">
      <svg className="h-full w-full bg-[#fcfcfc] font-['Liberation_Sans',sans-serif]" fill="none">
        <path d={`M${px(0)} 3V707`} stroke="#7fa8a6" strokeWidth="1.500" />
        <path d={`M3 ${py(0)}H4000`} stroke="#a9bfbf" strokeWidth="1.500" />
        <path d={`M${px(10)} 3V707`} stroke="#c4c4c4" />
        {range(-7, 1).map((j) =>
          range(-1, 13).map((i) => (
            <rect key={`${i},${j}`} x={Math.floor(px(i))} y={Math.floor(py(j))} width="1" height="1" fill="#333" />
          ))
        )}
        <Dimension from={2} to={3} at={266} ext={[262, 339]} label="1.000" />
        <Dimension from={2} to={4} at={498} ext={[428, 502]} label="2.000" />
        <path d={`M${px(2)} ${py(-3)}H${px(3)}`} stroke="#444" />
        <path d={`M${px(2)} ${py(-2)}H${px(4)}`} stroke="#8a8a8a" />
        {[[2, -3], [3, -3], [2, -2], [4, -2]].map(([x, y]) => (
          <rect key={`${x},${y}`} x={px(x) - 1.5} y={py(y) - 1.5} width="3" height="3" fill="#a01818" />
        ))}
        <AxisCross x={px(0)} y={py(0)} />
        <AxisCross x={42.5} y={598} />
        <text x="100%" dx="-3" y="701" textAnchor="end" fontSize="11" fill="#111">[m]</text>
      </svg>
    </div>
  );
}

/* ---------- table ---------- */

const rows = [
  ["0.000", "0.000", "0.000"],
  ["0.000", "0.000", "-5.000"],
  ["0.050", "0.000", "-5.000"],
  ["4.000", "0.000", "-5.000"],
];

const sheets = [
  "Nós",
  "Linhas",
  "Materiais",
  "Superfícies",
  "Sólidos",
  "Aberturas",
  "Apoios nodais",
  "Apoios em linha",
  "Apoios elásticos de superfícies",
  "Articulações de linha",
  "Secções",
  "Articulações de barras",
  "Excentricidades de barras",
  "Divisões de barras",
  "Barras",
  "Apoios elásticos de barras",
];

const bevel = "border-b border-r border-[#6e6e6e] font-normal shadow-[inset_1px_1px_0_#fff]";
const picked = (on: boolean) => (on ? "bg-[#3399ff] text-white" : "bg-[#e1e1e1]");
const head = "border-[#8a8a8a] bg-[#f0f0f0] font-normal";
const cell = "h-4 border-b border-r border-[#8f8f8f] bg-white";

function NodeTable() {
  return (
    <table className="w-[1537px] table-fixed border-separate border-spacing-0 border-l border-t border-[#5c5c5c] leading-[14px]">
      <colgroup>
        <col className="w-[45px]" />
        <col className="w-[84px]" />
        <col className="w-[72px]" />
        <col className="w-[90px]" />
        <col className="w-[78px]" />
        <col className="w-[78px]" />
        <col className="w-[78px]" />
        <col />
      </colgroup>
      <thead>
        <tr>
          <th rowSpan={3} className={clsx(bevel, "bg-[#e1e1e1] leading-[13px]")}>
            Nó
            <br />
            nº
          </th>
          {["A", "B", "C", "D", "E", "F", "G"].map((c) => (
            <th key={c} className={clsx(bevel, picked(c === "A"), "h-[14px] leading-[13px]")}>
              {c}
            </th>
          ))}
        </tr>
        <tr>
          <th className={clsx(head, "h-4 border-r")} />
          <th className={clsx(head, "border-r")}>Nó de</th>
          <th className={clsx(head, "border-r")}>Sistema de</th>
          <th colSpan={3} className={clsx(head, "border-r")}>Coordenadas do nó</th>
          <th className={head} />
        </tr>
        <tr>
          {["Tipo de nó", "referência", "coordenadas", "X [m]", "Y [m]", "Z [m]", "Comentário"].map((c) => (
            <th key={c} className={clsx(head, "h-[17px] border-b border-r pb-px")}>{c}</th>
          ))}
        </tr>
      </thead>
      <tbody>
        {rows.map((r, i) => (
          <tr key={i}>
            <th className={clsx(bevel, picked(i === 0))}>{i + 1}</th>
            <td className={clsx(cell, "pl-1", i === 0 && "outline outline-1 -outline-offset-1 outline-dotted outline-black")}>Padrão</td>
            <td className={clsx(cell, "text-center")}>0</td>
            <td className={clsx(cell, "pl-1")}>
              <u>C</u>artesiano
            </td>
            {r.map((v, k) => (
              <td key={k} className={clsx(cell, "pr-1 text-right")}>{v}</td>
            ))}
            <td className={cell} />
          </tr>
        ))}
      </tbody>
    </table>
  );
}

function TablePanel() {
  return (
    <section className="mt-[5px] flex shrink-0 flex-col overflow-hidden border-t border-[#eef0f6]">
      <h2 className="h-[19px] bg-[#b9bfc9] pl-1 leading-[18px] text-[#444]">1.1 Nós</h2>
      <div className="flex h-[25px] items-center bg-linear-to-b from-[#e9edf6] to-[#ccd1db] pb-px pl-[9px]">
        <Tools list={tableTools} />
      </div>
      <div className="h-[156px] overflow-hidden border-t border-[#5c5c5c] bg-[#f0f0f0] font-['Liberation_Sans',sans-serif] text-[11px] text-black">
        <div className="border-l border-[#5c5c5c] bg-white pl-[2px] pt-[2px]">
          <NodeTable />
        </div>
        <div className="flex bg-[#f0f0f0] pt-[5px]" role="tablist">
          {sheets.map((s, i) => (
            <button
              key={s}
              type="button"
              role="tab"
              aria-selected={i === 0}
              className={clsx(
                "h-[18px] shrink-0 rounded-b-[3px] border border-[#6e6e6e] leading-4 whitespace-nowrap",
                i === 0 ? "border-t-white bg-white px-[5px]" : "-ml-px bg-[#e4e4e4] px-[3px]"
              )}
            >
              {s}
            </button>
          ))}
        </div>
      </div>
    </section>
  );
}

/* ---------- status bar and grid menu ---------- */

function MenuItem({ icon, label }: { icon: string; label: string }) {
  return (
    <button type="button" className="flex h-[22px] w-full items-center text-left">
      <span className="flex w-[25px] justify-center">
        <Icon name={icon} />
      </span>
      <span className="pl-[6px]">{label}</span>
    </button>
  );
}

function GridMenu() {
  return (
    <div className="absolute bottom-[10px] left-[22px] z-10 w-[227px] rounded-sm border border-[#7f838b] bg-linear-to-r from-[#e9edf6] from-[25px] to-[#fafafa] to-[25px] pt-[2px] pb-px font-['Open_Sans',sans-serif] text-[11px] text-[#444] shadow-[2px_2px_3px_rgba(0,0,0,0.35)]">
      <MenuItem icon="gridEye" label="Mostrar grelha" />
      <hr className="mt-[3px] mb-[2px] ml-[31px] border-[#c8c8c8]" />
      <div className="ml-px border-[3px] border-[#c00000] pb-px [&_button]:-ml-1">
        <MenuItem icon="gridMul" label="Aumentar x2 o espaçamento" />
        <MenuItem icon="gridDiv" label="Dividir x2 o espaçamento" />
      </div>
      <div className="pt-[3px]">
        <MenuItem icon="gridHand" label="Editar..." />
      </div>
    </div>
  );
}

function Pointer() {
  return (
    <svg
      className="pointer-events-none absolute -left-[88px] bottom-[25px] drop-shadow-[2px_3px_2px_rgba(0,0,0,0.45)]"
      width="100"
      height="106"
      viewBox="0 0 100 106"
      aria-hidden
    >
      <path d="M2.500 10L9 6l66 70 10-8 10 36-35-13 9-8z" fill="#c00000" />
    </svg>
  );
}

const flag =
  "h-[18px] shrink-0 whitespace-nowrap border-l border-t border-black bg-[#c3c7ce] text-left leading-[17px] shadow-[1px_0_0_#fff]";

function StatusBar() {
  return (
    <footer className="flex h-[22px] shrink-0 items-end justify-end gap-[2px] border-t border-b border-t-[#9ba0aa] border-b-[#222] bg-linear-to-b from-[#dfe2e9] via-[#a8acb5] to-[#b9bdc6] pr-[162px] font-['Liberation_Sans',sans-serif] text-[11px] text-[#222]">
      <button type="button" className={clsx(flag, "w-[53px]")}>AJUSTAR</button>
      <div className="relative">
        <button type="button" className="h-[18px] w-[49px] border-l border-t border-white bg-[#c3c7ce] text-left leading-[17px] text-[#555]">
          GRELHA
        </button>
        <GridMenu />
        <Pointer />
      </div>
      <button type="button" className={clsx(flag, "w-[50px]")}>CARTES</button>
      <button type="button" className={clsx(flag, "w-[67px]")}>AJUST. OBJ.</button>
      <button type="button" className={clsx(flag, "w-[72px]")}>LINHAS AUX.</button>
      <button type="button" className={clsx(flag, "w-[29px]")}>DXF</button>
    </footer>
  );
}

export default function App() {
  return (
    <div className="flex h-screen flex-col overflow-hidden bg-[#cfd3dc] font-['Open_Sans',sans-serif] text-[11px]">
      <header className="flex h-[23px] shrink-0 items-center gap-1 bg-white pl-[2px] text-black">
        <Icon name="app" />
        <h1 className="pl-px">RFEM 5.23.01 x64 - [4663_espaçamento]</h1>
      </header>
      <nav className="flex h-6 shrink-0 items-center gap-[15px] text-[#444]">
        <span className="-mr-[5px] flex items-center gap-1 pl-1">
          <span className="h-4 border-l-2 border-dotted border-[#9da3ae]" />
          <Icon name="rfem" />
        </span>
        {menu.map(([a, k, b]) => (
          <button key={k + b} type="button">
            {a}
            <u>{k}</u>
            {b}
          </button>
        ))}
      </nav>
      <div className="flex h-[26px] shrink-0">
        <ToolGroup>
          <Tools list={fileTools} />
          <select aria-label="Caso de carga" className="mx-[2px] h-[20px] w-[201px] shrink-0 appearance-none bg-white" />
          <span className="-ml-[2px] mr-[2px] flex h-[20px] w-[15px] shrink-0 items-center justify-center bg-[#dde1e9]">
            <svg width="7" height="4" viewBox="0 0 7 4" aria-hidden>
              <path d="M0 0h7L3.500 4z" fill="#7d828c" />
            </svg>
          </span>
          <Tools list={loadTools} />
        </ToolGroup>
        <ToolGroup>
          <Tools list={planeTools} />
        </ToolGroup>
        <ToolGroup>
          <Tools list={exportTools} />
        </ToolGroup>
      </div>
      <div className="flex h-[27px] shrink-0">
        <ToolGroup>
          <Tools list={insertTools} />
        </ToolGroup>
        <ToolGroup>
          <Tools list={viewTools} />
        </ToolGroup>
        <ToolGroup>
          <Tools list={resultTools} />
        </ToolGroup>
      </div>
      <main className="flex min-h-0 flex-1 gap-[5px]">
        <Navigator />
        <div className="flex min-w-0 flex-1 flex-col">
          <ModelView />
          <TablePanel />
        </div>
      </main>
      <StatusBar />
    </div>
  );
}
